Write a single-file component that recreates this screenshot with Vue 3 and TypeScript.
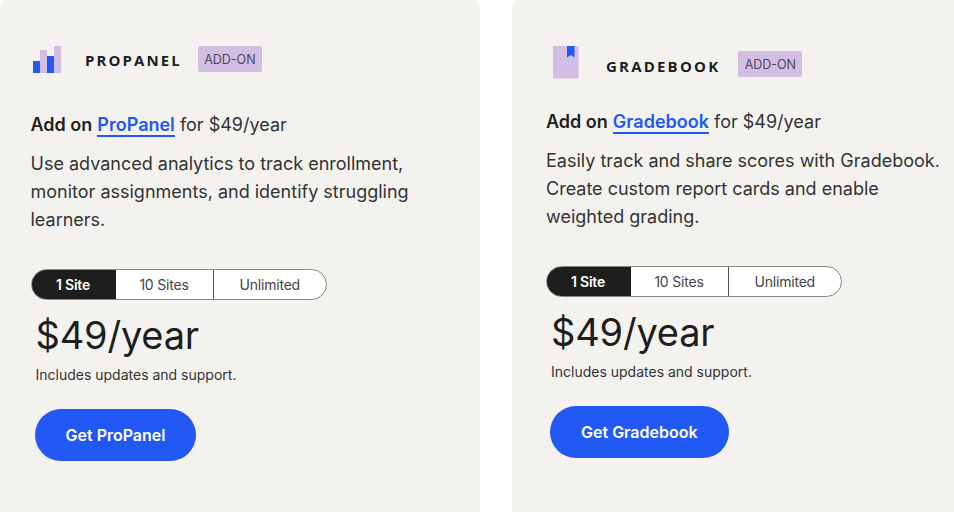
<script setup lang="ts">
interface Plan {
  title: string
  name: string
  desc: string[]
  icon: string
  cta: string
}
const plans: Plan[] = [
  {
    title: 'PROPANEL',
    name: 'ProPanel',
    icon: 'bars',
    desc: ['Use advanced analytics to track enrollment,', 'monitor assignments, and identify struggling', 'learners.'],
    cta: 'Get ProPanel',
  },
  {
    title: 'GRADEBOOK',
    name: 'Gradebook',
    icon: 'book',
    desc: ['Easily track and share scores with Gradebook.', 'Create custom report cards and enable', 'weighted grading.'],
    cta: 'Get Gradebook',
  },
]
</script>

<template>
  <div class="page">
    <section v-for="p in plans" :key="p.name" class="card" :class="p.icon">
      <header class="head">
        <svg v-if="p.icon === 'bars'" class="ico" width="28" height="28" viewBox="0 0 28 28">
          <rect x="7" y="4" width="7" height="23" fill="#d2bde3" />
          <rect x="21" y="0" width="7" height="27" fill="#d2bde3" />
          <rect x="0" y="15" width="7" height="12" fill="#2259f5" />
          <rect x="14" y="10" width="7" height="17" fill="#2259f5" />
        </svg>
        <svg v-else class="ico" width="26" height="33" viewBox="0 0 26 33">
          <rect x="0" y="0" width="25.500" height="32.500" rx="1" fill="#d2bde3" />
          <path d="M14 0H21.500V11.500L17.750 9L14 11.500Z" fill="#2259f5" />
        </svg>
        <span class="title">{{ p.title }}</span>
        <span class="tag">ADD-ON</span>
      </header>
      <p class="lead"><b>Add on</b> <a class="link">{{ p.name }}</a> for $49/year</p>
      <p class="desc"><span v-for="l in p.desc" :key="l">{{ l }}</span></p>
      <div class="seg">
        <span class="opt on">1 Site</span>
        <span class="opt mid">10 Sites</span>
        <span class="opt last">Unlimited</span>
      </div>
      <div class="price">$49/year</div>
      <div class="note">Includes updates and support.</div>
      <a class="cta">{{ p.cta }}</a>
    </section>
  </div>
</template>

<style>
html, body { margin: 0; background: #fff; overflow: hidden; }
</style>

<style scoped>
.page {
  width: 954px;
  height: 512px;
  overflow: hidden;
  display: flex;
  gap: 32px;
  font-family: Inter, "Liberation Sans", sans-serif;
  color: #1e1e1e;
}
.card {
  flex: none;
  box-sizing: border-box;
  width: 480px;
  height: 530px;
  background: #f4f2ef;
  border-radius: 8px;
  padding: 46px 0 0 30.500px;
}
.card.book { padding-left: 34px; }
.head { display: flex; align-items: flex-start; height: 28px; }
.book .head { height: 33px; }
.ico { flex: none; margin-left: 2.500px; }
.book .ico { margin-left: 7px; }
.title {
  margin: 4px 0 0 24px;
  font-family: "Open Sans", sans-serif;
  font-weight: 700;
  font-size: 15px;
  line-height: 21px;
  letter-spacing: 2.100px;
  color: #1e1e1e;
}
.book .title { margin: 10px 0 0 27px; letter-spacing: 2.200px; }
.tag {
  margin: 0 0 0 16px;
  box-sizing: border-box;
  padding-top: 1px;
  background: #d2bde3;
  border-radius: 2px;
  width: 64px;
  height: 25.500px;
  display: flex;
  align-items: center;
  justify-content: center;
  font-size: 12.500px;
  color: #4d4858;
}
.book .tag { margin: 5px 0 0 18px; height: 26px; }
.lead {
  margin: 37px 0 0;
  font-size: 18px;
  line-height: 28px;
  color: #333;
}
.book .lead { margin-top: 29px; }
.lead b { font-weight: 600; color: #1e1e1e; }
.link {
  color: #2259f5;
  font-weight: 600;
  border-bottom: 2px solid #2259f5;
}
.desc { margin: 11px 0 0; font-size: 18px; line-height: 28px; color: #333; }
.desc span { display: block; white-space: nowrap; }
.seg {
  margin-top: 35px;
  width: 296.500px;
  height: 31px;
  box-sizing: border-box;
  display: flex;
  border: 1px solid #888;
  border-radius: 16px;
  background: #fff;
  overflow: hidden;
  font-size: 14px;
  letter-spacing: -0.200px;
  color: #444;
}
.book .seg { margin-left: -0.500px; }
.opt { display: flex; align-items: center; justify-content: center; padding-bottom: 1px; box-sizing: border-box; }
.on { width: 85px; background: #1e1e1e; color: #fff; font-weight: 600; margin: -1px 0 -1px -1px; }
.mid { width: 98px; border-right: 1px solid #555; }
.last { flex: 1; }
.price {
  margin: 11px 0 0 5px;
  font-size: 38px;
  line-height: 48px;
  letter-spacing: -0.200px;
  font-weight: 400;
  color: #1e1e1e;
}
.note { margin: 5px 0 0 5px; font-size: 14px; line-height: 22px; color: #333; }
.cta {
  margin: 23px 0 0 4.500px;
  display: inline-flex;
  align-items: center;
  justify-content: center;
  height: 52px;
  padding: 0 30.500px;
  border-radius: 26px;
  background: #2259f5;
  color: #fff;
  font-weight: 600;
  font-size: 16px;
}
.book .cta { margin-left: 4px; padding: 0 31px; }
</style>
